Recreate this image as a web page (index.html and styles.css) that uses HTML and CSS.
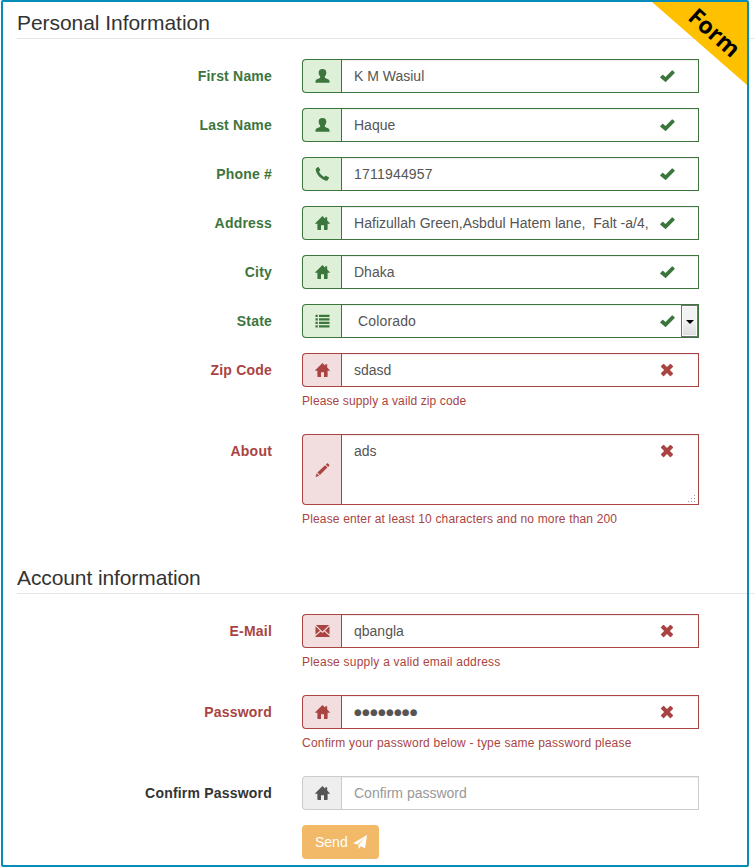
FILE: index.html
```html
<!DOCTYPE html>
<html lang="en">
<head>
<meta charset="utf-8">
<title>Form</title>
<link rel="stylesheet" href="styles.css">
</head>
<body>
<svg class="sprite" aria-hidden="true">
  <symbol id="user" viewBox="0 0 14 14"><path d="M7 0C4.300 0 3.100 1.500 3.200 3.700c0 1.500.5 2.700 1.300 3.600.3.500.3 1.500-.2 1.800L1 10.600C.3 11.100 0 11.700 0 12.600v1.200h14v-1.200c0-.9-.3-1.500-1-2L9.700 9.100c-.5-.3-.5-1.300-.2-1.800.8-.9 1.300-2.100 1.300-3.600C10.900 1.500 9.700 0 7 0z"/></symbol>
  <symbol id="phone" viewBox="0 0 14 14"><path d="M.8 1.300 2.400.1c.3-.2.6-.1.8.2l1.500 2.500c.2.300.1.600-.2.900l-1 .9c.9 2.100 2.800 4.100 5.100 5.300l1-1c.2-.2.500-.3.800-.1l2.900 1.500c.3.200.4.500.2.800l-1.200 2c-.3.500-.7.700-1.300.6C5.900 13 .6 7.600.2 2.600c0-.5.2-1 .6-1.300z"/></symbol>
  <symbol id="home" viewBox="0 0 15 14"><path d="M7.500 0 .2 7.200c-.3.300-.1.600.2.600h2v5.500c0 .4.200.6.600.6h3V9.200h3v4.700h3c.4 0 .6-.2.600-.6V7.800h2c.3 0 .5-.3.200-.6L12.200 4.600V1.200h-2v1.500z"/></symbol>
  <symbol id="list" viewBox="0 0 14 14"><path d="M0 .8h2.300v2.300H0zM3.500.8H14v2.300H3.500zM0 4.300h2.300v2.300H0zM3.500 4.300H14v2.300H3.500zM0 7.800h2.300v2.300H0zM3.500 7.800H14v2.300H3.500zM0 11.300h2.300v2.300H0zM3.500 11.300H14v2.300H3.500z"/></symbol>
  <symbol id="pencil" viewBox="0 0 14 14"><path d="m0 14 1.200-3.700 2.500 2.500zM1.900 9.600 9.600 2.200 11.900 4.500 4.400 12.100zM10.300 1.600 11.500.5c.3-.3.700-.3 1 0l1.200 1.200c.3.300.3.700 0 1L12.600 3.900z"/></symbol>
  <symbol id="mail" viewBox="0 0 14 14"><path d="M.4 1.100h13.200L7 7.600zM0 2.300l4.500 4.400L0 10.500zM14 2.300 9.500 6.700l4.500 3.800zM5.300 7.400 7 9.100l1.700-1.700 5.300 4.500v1.200H0v-1.200z"/></symbol>
  <symbol id="check" viewBox="0 0 15 14"><path d="m.3 7.900 2-2c.3-.3.600-.3.900 0l2.300 2.200L11.900 1.600c.3-.3.600-.3.900 0l1.700 1.700c.3.300.3.600 0 .9l-8.500 8.500c-.3.300-.6.300-.9 0L.3 8.800c-.3-.3-.3-.6 0-.9z"/></symbol>
  <symbol id="cross" viewBox="0 0 14 14"><path d="m1.100 3.100 2-2c.3-.3.600-.3.900 0l3 3 3-3c.3-.3.600-.3.900 0l2 2c.3.300.3.600 0 .9l-3 3 3 3c.3.300.3.600 0 .9l-2 2c-.3.300-.6.300-.9 0l-3-3-3 3c-.3.300-.6.300-.9 0l-2-2c-.3-.3-.3-.6 0-.9l3-3-3-3c-.3-.3-.3-.6 0-.9z"/></symbol>
  <symbol id="send" viewBox="0 0 14 14"><path d="M14 0 0 8.300l4.400 1.300L12.200 2 5.500 10v4l2.400-2.800 4.200 2z"/></symbol>
</svg>
<main class="panel">
  <form class="form">
    <h2 class="legend">Personal Information</h2>
    <div class="row ok"><span class="label">First Name</span><div class="field"><div class="group"><span class="addon"><svg class="icon"><use href="#user"/></svg></span><span class="control">K M Wasiul</span><svg class="mark check"><use href="#check"/></svg></div></div></div>
    <div class="row ok"><span class="label">Last Name</span><div class="field"><div class="group"><span class="addon"><svg class="icon"><use href="#user"/></svg></span><span class="control">Haque</span><svg class="mark check"><use href="#check"/></svg></div></div></div>
    <div class="row ok"><span class="label">Phone #</span><div class="field"><div class="group"><span class="addon"><svg class="icon"><use href="#phone"/></svg></span><span class="control digits">1711944957</span><svg class="mark check"><use href="#check"/></svg></div></div></div>
    <div class="row ok"><span class="label">Address</span><div class="field"><div class="group"><span class="addon"><svg class="icon"><use href="#home"/></svg></span><span class="control address">Hafizullah Green,Asbdul Hatem lane,&nbsp; Falt -a/4,</span><svg class="mark check"><use href="#check"/></svg></div></div></div>
    <div class="row ok"><span class="label">City</span><div class="field"><div class="group"><span class="addon"><svg class="icon"><use href="#home"/></svg></span><span class="control">Dhaka</span><svg class="mark check"><use href="#check"/></svg></div></div></div>
    <div class="row ok"><span class="label">State</span><div class="field"><div class="group"><span class="addon"><svg class="icon"><use href="#list"/></svg></span><span class="control select">Colorado<span class="arrow"></span></span><svg class="mark check"><use href="#check"/></svg></div></div></div>
    <div class="row bad"><span class="label">Zip Code</span><div class="field"><div class="group"><span class="addon"><svg class="icon"><use href="#home"/></svg></span><span class="control">sdasd</span><svg class="mark"><use href="#cross"/></svg></div><small class="help">Please supply a vaild zip code</small></div></div>
    <div class="row bad"><span class="label">About</span><div class="field"><div class="group tall"><span class="addon"><svg class="icon"><use href="#pencil"/></svg></span><span class="control">ads</span><svg class="mark"><use href="#cross"/></svg><svg class="grip" viewBox="0 0 8 8"><path d="M6 0h1v1H6zM3 3h1v1H3zM6 3h1v1H6zM0 6h1v1H0zM3 6h1v1H3zM6 6h1v1H6z"/></svg></div><small class="help about">Please enter at least 10 characters and no more than 200</small></div></div>
    <h2 class="legend account">Account information</h2>
    <div class="row bad"><span class="label">E-Mail</span><div class="field"><div class="group"><span class="addon"><svg class="icon"><use href="#mail"/></svg></span><span class="control">qbangla</span><svg class="mark"><use href="#cross"/></svg></div><small class="help loose">Please supply a valid email address</small></div></div>
    <div class="row bad"><span class="label">Password</span><div class="field"><div class="group"><span class="addon"><svg class="icon"><use href="#home"/></svg></span><span class="control password">●●●●●●●●</span><svg class="mark"><use href="#cross"/></svg></div><small class="help loose">Confirm your password below - type same password please</small></div></div>
    <div class="row"><span class="label">Confirm Password</span><div class="field"><div class="group plain"><span class="addon"><svg class="icon"><use href="#home"/></svg></span><span class="control placeholder">Confirm password</span></div></div></div>
    <div class="row"><span class="label"></span><button class="send" type="button">Send <svg class="plane"><use href="#send"/></svg></button></div>
  </form>
  <div class="ribbon"></div>
  <span class="ribbon-text">Form</span>
  <div class="frame"></div>
</main>
</body>
</html>
```
FILE: styles.css
```css
* { box-sizing: border-box; }
body { margin: 0; background: #fff; color: #333; font: 14px/20px "Liberation Sans", Arial, sans-serif; }
.sprite { position: absolute; width: 0; height: 0; }
.panel { position: relative; height: 867px; overflow: hidden; }
.frame { position: absolute; inset: 0 5px 0 1px; border: 2px solid #058cb8; border-radius: 2px; }
.form { padding: 8px 0 0 17px; }
.legend { height: 31px; margin: 0 0 20px; border-bottom: 1px solid #e5e5e5; font-size: 21px; line-height: 30px; font-weight: 400; letter-spacing: -.05px; }
.account { margin-top: 26px; letter-spacing: -.1px; }
.row { display: flex; margin-bottom: 15px; }
.label { width: 255px; margin-right: 30px; padding-top: 7px; text-align: right; font-weight: 700; letter-spacing: .2px; }
.field { width: 397px; }
.group { position: relative; display: flex; height: 34px; color: #555; --line: #ccc; --fill: #eee; }
.tall { height: 71px; }
.plain .icon { color: #555; }
.ok .label { color: #3c763d; }
.bad .label { color: #a94442; }
.ok .group { --line: #3c763d; --fill: #dff0d8; }
.bad .group { --line: #a94442; --fill: #f2dede; }
.addon { display: flex; width: 39px; align-items: center; padding-left: 12px; border: 1px solid var(--line); border-right: 0; border-radius: 4px 0 0 4px; background: var(--fill); }
.ok .addon, .ok .mark { color: #3c763d; }
.bad .addon, .bad .mark { color: #a94442; }
.icon { width: 15px; height: 14px; fill: currentColor; }
.control { flex: 1; padding: 6px 12px; border: 1px solid var(--line); box-shadow: inset 0 1px 1px rgba(0, 0, 0, .075); white-space: nowrap; }
.digits { letter-spacing: .2px; }
.address { letter-spacing: .03px; }
.mark { position: absolute; top: 10px; right: 25px; width: 14px; height: 14px; fill: currentColor; }
.check { width: 15px; right: 24px; }
.select { position: relative; padding-left: 16px; letter-spacing: .15px; }
.arrow { position: absolute; top: 0; right: 0; width: 17px; height: 32px; border: 1px solid #707070; background: linear-gradient(#f2f2f2 50%, #dcdcdc); box-shadow: inset 0 0 0 1px #fafafa; }
.arrow::after { content: ""; position: absolute; left: 4px; top: 14px; border: 4px solid transparent; border-top-color: #000; border-bottom: 0; }
.help { display: block; margin: 6px 0 9px; color: #a94442; font-size: 12px; line-height: 17px; letter-spacing: .12px; white-space: nowrap; }
.about { letter-spacing: .16px; }
.loose { letter-spacing: .22px; }
.grip { position: absolute; right: 3px; bottom: 2px; width: 8px; height: 8px; fill: #999; }
.placeholder { color: #999; }
.password { font-family: "DejaVu Sans", sans-serif; font-size: 8.8px; letter-spacing: .3px; }
.send { display: flex; align-items: center; width: 77px; height: 34px; padding: 0 12px 0 13px; border: 0; border-radius: 4px; background: #f2b968; color: #fff; font: 14px/20px "Liberation Sans", Arial, sans-serif; }
.plane { width: 14px; height: 14px; margin-left: 5px; fill: currentColor; }
.ribbon { position: absolute; top: 2px; right: 7px; width: 95px; height: 83px; background: #ffc000; clip-path: polygon(0 0, 100% 0, 100% 100%); }
.ribbon-text { position: absolute; left: 685px; top: 18px; width: 60px; color: #000; text-align: center; font: 700 23px/28px "Open Sans", sans-serif; transform: rotate(42deg); }
```
